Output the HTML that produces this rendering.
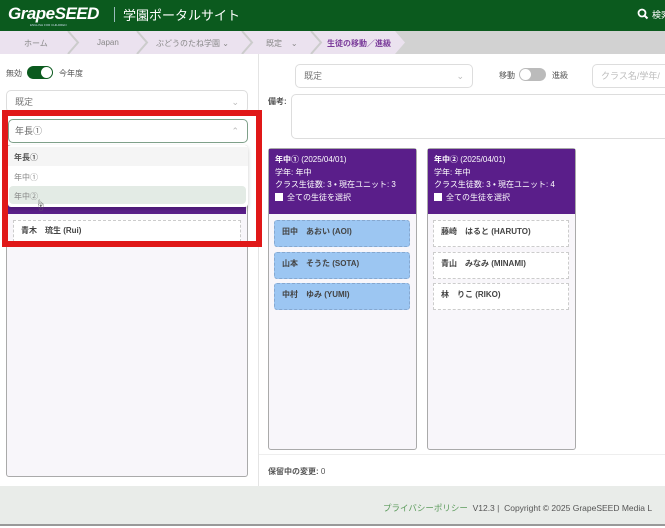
<!DOCTYPE html>
<html><head><meta charset="utf-8"><style>
*{box-sizing:border-box;margin:0;padding:0}
body{width:665px;height:528px;overflow:hidden;background:#fff;font-family:"Liberation Sans","Noto Sans CJK JP",sans-serif;font-size:9px;color:#555;position:relative}
.a{position:absolute}
.hdr{left:0;top:0;width:665px;height:31px;background:#0b5a1e}
.bc{left:0;top:31px;width:665px;height:23px;background:#d2d2d2}
.sel{border:1px solid #ddd;border-radius:5px;background:#fff;color:#777;padding-left:8px;line-height:22px}
.card{border:1px solid #aaa;border-radius:3px;background:#f8f6fa}
.ch{background:#5a1e8a;color:#fff;font-size:8px;line-height:12.5px;padding:5px 6px 8px;height:65px}
.st{position:absolute;height:27px;font-size:8px;padding:5px 7px;color:#444;font-weight:bold}
.blue{background:#9cc6f2;border:1px dashed #86a8d0;border-radius:3px}
.dash{background:#fff;border:1px dashed #ccc}
</style></head><body>
<div class="a hdr"></div>
<div class="a" style="left:8px;top:4px;color:#fff;font-size:17px;font-weight:bold;font-style:italic;letter-spacing:-0.5px">GrapeSEED</div>
<div class="a" style="left:30px;top:23px;color:#cde;font-size:3px">ENGLISH FOR CHILDREN</div>
<div class="a" style="left:114px;top:7px;width:1px;height:15px;background:#9bb"></div>
<div class="a" style="left:123px;top:5px;color:#fff;font-size:13px">学園ポータルサイト</div>
<svg class="a" style="left:637px;top:8px" width="12" height="12"><circle cx="5" cy="5" r="3.5" stroke="#fff" stroke-width="1.8" fill="none"/><path d="M7.5 7.5L10.5 10.5" stroke="#fff" stroke-width="2"/></svg>
<div class="a" style="left:652px;top:8px;color:#fff;font-size:9px;white-space:nowrap">検索</div>
<div class="a bc"></div>
<svg class="a" style="left:0;top:31px" width="410" height="23"><path d="M0 0H395L405 11.5L395 23H0Z" fill="#ebe2ef"/>
<g stroke="#ccc" fill="none" stroke-width="2"><path d="M68 0L78 11.5L68 23"/><path d="M137 0L147 11.5L137 23"/><path d="M242 0L252 11.5L242 23"/><path d="M311 0L321 11.5L311 23"/></g></svg>
<div class="a" style="left:24px;top:38px;color:#888;font-size:8px">ホーム</div>
<div class="a" style="left:97px;top:38px;color:#888;font-size:8px">Japan</div>
<div class="a" style="left:156px;top:38px;color:#888;font-size:8px">ぶどうのたね学園 ⌄</div>
<div class="a" style="left:266px;top:38px;color:#888;font-size:8px">既定 &nbsp;&nbsp;&nbsp;⌄</div>
<div class="a" style="left:327px;top:38px;color:#7a3a9a;font-size:8px;font-weight:bold">生徒の移動／進級</div>

<div class="a" style="left:258px;top:54px;width:1px;height:432px;background:#e4e4e4"></div>
<div class="a" style="left:6px;top:68px;font-size:8px">無効</div>
<div class="a" style="left:27px;top:66px;width:26px;height:13px;border-radius:7px;background:#0b5a1e"></div>
<div class="a" style="left:41px;top:67px;width:11px;height:11px;border-radius:6px;background:#fff"></div>
<div class="a" style="left:59px;top:68px;font-size:8px">今年度</div>
<div class="a sel" style="left:6px;top:90px;width:242px;height:23px">既定<span style="float:right;margin-right:8px;color:#bbb">⌄</span></div>

<div class="a card" style="left:6px;top:145px;width:242px;height:332px"></div>
<div class="a" style="left:8px;top:204px;width:238px;height:10px;background:#5a1e8a"></div>
<div class="a st dash" style="left:13px;top:220px;width:228px;height:22px;padding-top:4px">青木　琉生 (Rui)</div>
<div class="a" style="left:8px;top:119px;width:240px;height:24px;border:1px solid #7fa08a;border-radius:5px;background:#fff;padding-left:6px;line-height:22px;color:#666">年長①<span style="float:right;margin-right:8px;color:#bbb">⌃</span></div>
<div class="a" style="left:8px;top:145px;width:240px;height:62px;background:#fff;box-shadow:0 2px 4px rgba(0,0,0,.2);border-radius:3px"></div>
<div class="a" style="left:8px;top:147px;width:240px;height:19px;background:#f5f5f5;font-weight:bold;font-size:8px;padding:5px 6px;color:#555">年長①</div>
<div class="a" style="left:8px;top:167px;width:240px;height:19px;font-size:8px;padding:5px 6px;color:#888">年中①</div>
<div class="a" style="left:9px;top:186px;width:237px;height:18px;background:#e3ebe5;border-radius:4px;font-size:8px;padding:5px 5px;color:#888">年中②</div>
<div class="a" style="left:35px;top:197px;font-size:11px;color:#666">☝</div>
<div class="a" style="left:2px;top:110px;width:260px;height:137px;border:6px solid #e01818"></div>

<div class="a sel" style="left:295px;top:64px;width:178px;height:24px">既定<span style="float:right;margin-right:8px;color:#bbb">⌄</span></div>
<div class="a" style="left:499px;top:70px;font-size:8px">移動</div>
<div class="a" style="left:519px;top:68px;width:27px;height:13px;border-radius:7px;background:#bbb"></div>
<div class="a" style="left:520px;top:69px;width:11px;height:11px;border-radius:6px;background:#fff"></div>
<div class="a" style="left:552px;top:70px;font-size:8px">進級</div>
<div class="a sel" style="left:592px;top:64px;width:80px;height:24px;color:#bbb">クラス名/学年/</div>
<div class="a" style="left:268px;top:96px;font-size:8px;color:#555;font-weight:bold">備考:</div>
<div class="a" style="left:291px;top:94px;width:380px;height:45px;border:1px solid #ddd;border-radius:5px"></div>

<div class="a card" style="left:268px;top:148px;width:149px;height:302px"><div class="ch"><b>年中①</b> (2025/04/01)<br>学年: 年中<br>クラス生徒数: 3 • 現在ユニット: 3<br><span style="display:inline-block;width:8px;height:8px;background:#fff;vertical-align:-1px;margin-right:4px"></span>全ての生徒を選択</div></div>
<div class="st blue a" style="left:274px;top:220px;width:136px">田中　あおい (AOI)</div>
<div class="st blue a" style="left:274px;top:252px;width:136px">山本　そうた (SOTA)</div>
<div class="st blue a" style="left:274px;top:283px;width:136px">中村　ゆみ (YUMI)</div>
<div class="a card" style="left:427px;top:148px;width:149px;height:302px"><div class="ch"><b>年中②</b> (2025/04/01)<br>学年: 年中<br>クラス生徒数: 3 • 現在ユニット: 4<br><span style="display:inline-block;width:8px;height:8px;background:#fff;vertical-align:-1px;margin-right:4px"></span>全ての生徒を選択</div></div>
<div class="st dash a" style="left:433px;top:220px;width:136px">藤崎　はると (HARUTO)</div>
<div class="st dash a" style="left:433px;top:252px;width:136px">青山　みなみ (MINAMI)</div>
<div class="st dash a" style="left:433px;top:283px;width:136px">林　りこ (RIKO)</div>
<div class="a" style="left:259px;top:454px;width:406px;height:1px;background:#eee"></div>
<div class="a" style="left:268px;top:466px;font-size:8px"><b>保留中の変更:</b> 0</div>

<div class="a" style="left:0;top:486px;width:665px;height:40px;background:#e9ece9;border-bottom:2px solid #999"></div>
<div class="a" style="left:383px;top:502px;font-size:8.5px;white-space:nowrap"><span style="color:#5a9a5a">プライバシーポリシー</span>&nbsp; V12.3 |&nbsp; Copyright © 2025 GrapeSEED Media L</div>
</body></html>
